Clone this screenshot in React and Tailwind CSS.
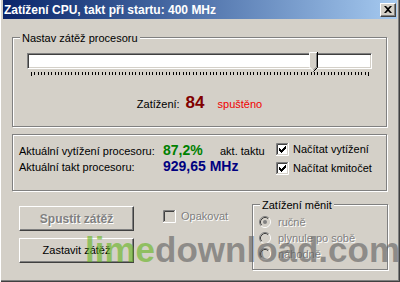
import React from 'react';

const ui = "font-['Liberation_Sans',Arial,sans-serif]";
const disabledText = 'text-[#808080] [text-shadow:1px_1px_0_#fff]';

function TitleBar() {
  return (
    <div className="mx-[3px] h-[19px] flex items-center justify-between pl-[1px] pr-[1px] bg-linear-to-r from-[#0a246a] to-[#a6caf0]">
      <span className="text-white font-bold text-[12px] leading-none">Zatížení CPU, takt při startu: 400 MHz</span>
      <button className="w-[16px] h-[14px] flex items-center justify-center bg-[#d4d0c8] border border-t-white border-l-white border-r-[#404040] border-b-[#404040] shadow-[inset_-1px_-1px_#808080]">
        <svg width="8" height="7" viewBox="0 0 8 7">
          <path d="M0 0h2l2 2 2-2h2L5 3.5 8 7H6L4 5 2 7H0l3-3.5z" fill="#000" />
        </svg>
      </button>
    </div>
  );
}

function Groupbox({ label, className = '', children }) {
  return (
    <div className={`relative border border-[#808080] shadow-[inset_1px_1px_#fff,1px_1px_#fff] ${className}`}>
      {label && (
        <span className="absolute -top-[7px] left-[7px] px-[2px] bg-[#d4d0c8] text-[11px] leading-[14px] text-black">
          {label}
        </span>
      )}
      {children}
    </div>
  );
}

function Slider() {
  const ticks = Array.from({ length: 101 }, (_, i) => Math.round(4 + i * 3.37));
  return (
    <div className="relative w-[345px]">
      <div className="h-[16px] bg-white border border-t-[#808080] border-l-[#808080] border-b-white border-r-white shadow-[inset_1px_1px_#404040,inset_-1px_-1px_#d4d0c8]" />
      <svg className="absolute left-[282px] -top-[1px]" width="9" height="20" viewBox="0 0 9 20">
        <polygon points="0,0 9,0 9,15 4.5,19.5 0,15" fill="#d4d0c8" />
        <path d="M0.5 15V0.5H8" stroke="#fff" fill="none" />
        <path d="M0.5 15L4 18.5" stroke="#fff" fill="none" />
        <path d="M8.5 0V15.5L4.5 19.5" stroke="#000" fill="none" />
        <path d="M7.5 1V15L4.5 18" stroke="#808080" fill="none" />
      </svg>
      <svg className="block mt-[3px]" width="345" height="4">
        {ticks.map((x, i) => (
          <rect key={i} x={x} y={0} width={1} height={i === 0 || i === 100 ? 4 : 3} fill="#000" />
        ))}
      </svg>
    </div>
  );
}

function Checkbox({ checked, disabled }) {
  const marks = [
    [3, 5], [4, 6], [5, 7], [6, 6], [7, 5], [8, 4], [9, 3],
  ];
  return (
    <svg width="13" height="13" viewBox="0 0 13 13" className="shrink-0">
      <rect x="2" y="2" width="9" height="9" fill={disabled ? '#d4d0c8' : '#fff'} />
      <path d="M0.5 12V0.5H12" stroke="#808080" fill="none" />
      <path d="M1.5 11V1.5H11" stroke="#404040" fill="none" />
      <path d="M0 12.5H12.5V0" stroke="#fff" fill="none" />
      <path d="M1 11.5H11.5V1" stroke="#d4d0c8" fill="none" />
      {checked && marks.map(([x, y]) => <rect key={x} x={x} y={y} width="1" height="3" fill="#000" />)}
    </svg>
  );
}

function Radio({ checked }) {
  return (
    <svg width="12" height="12" viewBox="0 0 12 12" className="shrink-0">
      <circle cx="6" cy="6" r="5" fill="#d4d0c8" />
      <path d="M2.11 9.89A5.5 5.5 0 0 1 9.89 2.11" stroke="#808080" fill="none" />
      <path d="M9.89 2.11A5.5 5.5 0 0 1 2.11 9.89" stroke="#fff" fill="none" />
      <path d="M2.82 9.18A4.5 4.5 0 0 1 9.18 2.82" stroke="#404040" fill="none" />
      <path d="M9.18 2.82A4.5 4.5 0 0 1 2.82 9.18" stroke="#d4d0c8" fill="none" />
      {checked && <circle cx="6" cy="6" r="2" fill="#808080" />}
    </svg>
  );
}

function Button({ children, disabled }) {
  return (
    <button
      className={`w-[115px] h-[25px] flex items-center justify-center bg-[#d4d0c8] border border-t-white border-l-white border-r-[#404040] border-b-[#404040] shadow-[inset_-1px_-1px_#808080] ${
        disabled ? `font-bold text-[12px] ${disabledText}` : 'text-[11px] text-black'
      }`}
    >
      {children}
    </button>
  );
}

export default function App() {
  return (
    <div
      className={`relative w-[400px] h-[282px] overflow-hidden bg-[#d4d0c8] text-[11px] text-black ${ui} shadow-[inset_1px_0_#fff,inset_-1px_-1px_#404040,inset_-2px_-2px_#808080]`}
    >
      <TitleBar />
      <div className="pl-[12px]">
        <Groupbox label="Nastav zátěž procesoru" className="mt-[18px] w-[375px] h-[90px]">
          <div className="pl-[14px] pt-[15px]">
            <Slider />
            <div className="mt-[17px] w-[345px] flex items-baseline justify-center">
              <span className="leading-[20px]">Zatížení:</span>
              <span className="ml-[6px] text-[17px] font-bold leading-[20px] text-[#800000]">84</span>
              <span className="ml-[13px] leading-[20px] text-[#f00000]">spuštěno</span>
            </div>
          </div>
        </Groupbox>

        <Groupbox className="mt-[7px] w-[375px] h-[57px]">
          <div className="flex pl-[6px] pt-[7px]">
            <div className="flex flex-col">
              <div className="flex items-baseline h-[16px]">
                <span className="w-[144px] leading-[16px]">Aktuální vytížení procesoru:</span>
                <span className="w-[57px] leading-[16px] text-[14px] font-bold text-[#008000]">87,2%</span>
                <span className="w-[56px] leading-[16px]">akt. taktu</span>
              </div>
              <div className="flex items-baseline h-[16px]">
                <span className="w-[144px] leading-[16px]">Aktuální takt procesoru:</span>
                <span className="leading-[16px] text-[14px] font-bold text-[#000080]">929,65 MHz</span>
              </div>
            </div>
            <div className="mt-[1px] flex flex-col gap-[6px]">
              <label className="h-[13px] flex items-center gap-[4px]">
                <Checkbox checked />
                <span>Načítat vytížení</span>
              </label>
              <label className="h-[13px] flex items-center gap-[4px]">
                <Checkbox checked />
                <span>Načítat kmitočet</span>
              </label>
            </div>
          </div>
        </Groupbox>

        <div className="mt-[13px] flex items-start">
          <div className="ml-[7px] pt-[2px] flex flex-col gap-[7px]">
            <Button disabled>Spustit zátěž</Button>
            <Button>Zastavit zátěž</Button>
          </div>
          <div className="ml-[29px] w-[89px] pt-[4px] flex items-center gap-[5px]">
            <Checkbox disabled />
            <span className={disabledText}>Opakovat</span>
          </div>
          <Groupbox label="Zatížení měnit" className="w-[136px] h-[66px]">
            <div className="pl-[6px] pt-[9px] flex flex-col">
              {[
                ['ručně', true],
                ['plynule po sobě', false],
                ['náhodně', false],
              ].map(([t, c]) => (
                <div key={t} className="h-[16px] flex items-center gap-[7px]">
                  <Radio checked={c} />
                  <span className={disabledText}>{t}</span>
                </div>
              ))}
            </div>
          </Groupbox>
        </div>
      </div>

      <div className="absolute left-[85px] top-[232px] text-[35px] font-bold leading-none tracking-[0px] whitespace-nowrap pointer-events-none">
        <span className="text-[rgba(99,181,27,0.6)]">lime</span>
        <span className="text-[rgba(93,93,93,0.6)]">download.com</span>
      </div>
    </div>
  );
}
